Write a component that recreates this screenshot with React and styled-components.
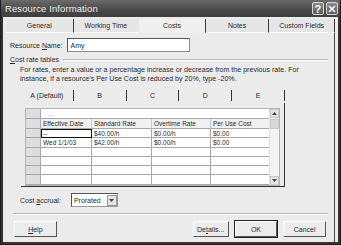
import styled, { createGlobalStyle } from 'styled-components'

const Global = createGlobalStyle`
  html, body { margin: 0; padding: 0; background: #2e2e2e; }
  body { font-family: Tahoma, "DejaVu Sans", "Liberation Sans", sans-serif; }
`

const Win = styled.div`
  width: 341px;
  height: 245px;
  box-sizing: border-box;
  display: flex;
  flex-direction: column;
  background: #333;
  border: 1px solid #1e1e1e;
  border-top: none;
`

const TitleBar = styled.div`
  height: 17px;
  display: flex;
  align-items: center;
  padding: 0 2px 0 4px;
  background: linear-gradient(#6a6a6a, #484848 60%, #404040);
  color: #eee;
  font-family: "Liberation Sans", sans-serif;
  font-size: 9.5px;
  letter-spacing: 0.1px;
`

const Title = styled.div`
  flex: 1;
`

const CapBtn = styled.div`
  width: 12px;
  height: 13px;
  margin-left: 2px;
  border: 1px solid #d8d8d8;
  border-radius: 2px;
  background: linear-gradient(#8a8a8a, #5c5c5c);
  color: #fff;
  font-size: 11px;
  font-weight: bold;
  box-sizing: border-box;
  display: flex;
  align-items: center;
  justify-content: center;
`

const Body = styled.div`
  flex: 1;
  margin: 0 2px 2px 2px;
  background: #ebebeb;
  display: flex;
  flex-direction: column;
  font-family: "Liberation Sans", sans-serif;
  font-size: 7px;
  color: #2a2a2a;
`

const TabStrip = styled.div`
  display: flex;
  height: 16px;
  padding: 0 3px 0 3px;
  background: #ebebeb;
`

const Tab = styled.div`
  width: ${p => p.$w}px;
  display: flex;
  align-items: center;
  justify-content: center;
  box-sizing: border-box;
  border-right: 1px solid ${p => (p.$sep ? '#3a3a3a' : 'transparent')};
  background: ${p => (p.$active ? '#efefef' : '#e6e6e6')};
  margin-top: 2px;
  border-bottom: 1px solid ${p => (p.$active ? 'transparent' : '#fafafa')};
`

const Panel = styled.div`
  flex: 1;
  margin: 0 3px 0 1px;
  border-right: 1px solid #4a4a4a;
  display: flex;
  flex-direction: column;
  padding: 3px 0 0 6px;
`

const Row = styled.div`
  display: flex;
  align-items: center;
  gap: ${p => p.$gap || 3}px;
  padding-left: ${p => p.$indent || 0}px;
  margin-top: ${p => p.$mt || 0}px;
`

const Field = styled.div`
  width: ${p => p.$w}px;
  height: 14px;
  box-sizing: border-box;
  border: 1px solid #8a8a8a;
  border-top-color: #555;
  border-left-color: #555;
  background: #fff;
  display: flex;
  align-items: center;
  padding-left: 3px;
`

const GroupHead = styled.div`
  display: flex;
  align-items: center;
  gap: 3px;
  margin-top: 4px;
  padding-right: 6px;
  &::after {
    content: '';
    flex: 1;
    border-top: 1px solid #b8b8b8;
    border-bottom: 1px solid #fff;
  }
`

const Note = styled.div`
  padding-left: 10px;
  margin-top: 3px;
  line-height: 8.5px;
  font-size: 7.1px;
  white-space: nowrap;
`

const InnerTabs = styled.div`
  display: flex;
  margin: 6px 0 0 11px;
  height: 14px;
  width: 264px;
`

const InnerTab = styled.div`
  flex: 1;
  display: flex;
  align-items: center;
  justify-content: center;
  border-right: 1px solid #333;
  margin: 1px 0 2px;
`

const GridPanel = styled.div`
  margin-left: 11px;
  width: 264px;
  height: 84px;
  box-sizing: border-box;
  border-right: 1px solid #333;
  border-bottom: 1px solid #333;
  padding: 5px 4px 0 4px;
`

const GridWrap = styled.div`
  display: flex;
  height: 76px;
  border: 1px solid #b4b4b4;
  background: #fff;
`

const Grid = styled.div`
  flex: 1;
  display: grid;
  grid-template-columns: 15px 51px 60px 59px 60px;
  grid-template-rows: 10px 10px repeat(6, 9.3px);
  overflow: hidden;
  font-size: 6.5px;
`

const Cell = styled.div`
  box-sizing: border-box;
  border-right: 1px solid ${p => (p.$head ? '#c8c8c8' : '#a8a8a8')};
  border-bottom: 1px solid #a8a8a8;
  background: ${p => (p.$rowhead ? '#dedede' : p.$head ? '#f1f1f1' : '#fff')};
  padding-left: 2px;
  display: flex;
  align-items: center;
  white-space: nowrap;
  overflow: hidden;
  outline: ${p => (p.$sel ? '1.5px solid #111' : 'none')};
  outline-offset: -1.5px;
`

const EditCell = styled.div`
  grid-column: 2 / span 4;
  box-sizing: border-box;
  border-bottom: 1px solid #a8a8a8;
  padding-left: 7px;
  color: #888;
  display: flex;
  align-items: center;
`

const Scroll = styled.div`
  width: 9px;
  background: #f3f3f3;
  border-left: 1px solid #e0e0e0;
  display: flex;
  flex-direction: column;
  justify-content: space-between;
`

const ScrollBtn = styled.div`
  height: ${p => p.$h || 9}px;
  background: ${p => (p.$thumb ? '#d8d8d8' : '#e4e4e4')};
  border: 1px solid #c8c8c8;
  box-sizing: border-box;
  display: flex;
  align-items: center;
  justify-content: center;
  margin-top: ${p => p.$mt || 0}px;
`

const Select = styled.div`
  width: 47px;
  height: 14px;
  box-sizing: border-box;
  border: 1px solid #555;
  border-right-color: #999;
  border-bottom-color: #999;
  background: #fff;
  display: flex;
  align-items: center;
  padding-left: 2px;
  justify-content: space-between;
`

const DropBtn = styled.div`
  width: 10px;
  height: 11px;
  background: #e4e4e4;
  border: 1px solid #999;
  box-sizing: border-box;
  display: flex;
  align-items: center;
  justify-content: center;
`

const Divider = styled.div`
  margin: 6px 6px 0 3px;
  border-top: 1px solid #b8b8b8;
  border-bottom: 1px solid #fafafa;
`

const Buttons = styled.div`
  display: flex;
  align-items: center;
  margin: 6px 0 0 4px;
  padding-right: 8px;
`

const Btn = styled.div`
  width: ${p => p.$w || 45}px;
  height: 16px;
  margin-left: ${p => p.$ml || 0}px;
  box-sizing: border-box;
  background: #ececec;
  border: 1px solid #fff;
  border-right-color: #555;
  border-bottom-color: #555;
  box-shadow: ${p => (p.$default ? '0 0 0 1px #222' : 'none')};
  display: flex;
  align-items: center;
  justify-content: center;
  font-size: 7px;
`

const U = styled.span`
  text-decoration: underline;
`

const Arrow = ({ down }) => (
  <svg width="5" height="3" viewBox="0 0 5 3">
    <path d={down ? 'M0 0 L5 0 L2.5 3 Z' : 'M0 3 L5 3 L2.5 0 Z'} fill="#444" />
  </svg>
)

const tabs = [
  { label: 'General', w: 68, sep: true },
  { label: 'Working Time', w: 66 },
  { label: 'Costs', w: 67, sep: true, active: true },
  { label: 'Notes', w: 64, sep: true },
  { label: 'Custom Fields', w: 66, sep: true },
]

const rows = [
  ['--', '$40.00/h', '$0.00/h', '$0.00'],
  ['Wed 1/1/03', '$42.00/h', '$0.00/h', '$0.00'],
  ['', '', '', ''],
  ['', '', '', ''],
  ['', '', '', ''],
  ['', '', '', ''],
]

export default function App() {
  return (
    <>
      <Global />
      <Win>
        <TitleBar>
          <Title>Resource Information</Title>
          <CapBtn>?</CapBtn>
          <CapBtn>
            <svg width="8" height="8" viewBox="0 0 8 8">
              <path d="M1 1 L7 7 M7 1 L1 7" stroke="#fff" strokeWidth="1.6" />
            </svg>
          </CapBtn>
        </TitleBar>
        <Body>
          <TabStrip>
            {tabs.map(t => (
              <Tab key={t.label} $w={t.w} $sep={t.sep} $active={t.active}>
                {t.label}
              </Tab>
            ))}
          </TabStrip>
          <Panel>
            <Row $gap={4} $mt={2}>
              <span>Resource <U>N</U>ame:</span>
              <Field $w={123}>Amy</Field>
            </Row>
            <GroupHead>
              <span><U>C</U>ost rate tables</span>
            </GroupHead>
            <Note>
              For rates, enter a value or a percentage increase or decrease from the previous rate. For
              <br />
              instance, if a resource's Per Use Cost is reduced by 20%, type -20%.
            </Note>
            <InnerTabs>
              <InnerTab>A (Default)</InnerTab>
              <InnerTab>B</InnerTab>
              <InnerTab>C</InnerTab>
              <InnerTab>D</InnerTab>
              <InnerTab>E</InnerTab>
            </InnerTabs>
            <GridPanel>
              <GridWrap>
                <Grid>
                  <Cell $rowhead />
                  <EditCell>...</EditCell>
                  <Cell $rowhead />
                  <Cell $head>Effective Date</Cell>
                  <Cell $head>Standard Rate</Cell>
                  <Cell $head>Overtime Rate</Cell>
                  <Cell $head>Per Use Cost</Cell>
                  {rows.map((r, i) => [
                    <Cell key={'h' + i} $rowhead />,
                    ...r.map((v, j) => (
                      <Cell key={i + '-' + j} $sel={i === 0 && j === 0}>
                        {v}
                      </Cell>
                    )),
                  ])}
                </Grid>
                <Scroll>
                  <div>
                    <ScrollBtn><Arrow /></ScrollBtn>
                    <ScrollBtn $thumb $h={10} $mt={1} />
                  </div>
                  <ScrollBtn><Arrow down /></ScrollBtn>
                </Scroll>
              </GridWrap>
            </GridPanel>
            <Row $gap={10} $indent={10} $mt={6}>
              <span>Cost <U>a</U>ccrual:</span>
              <Select>
                Prorated
                <DropBtn><Arrow down /></DropBtn>
              </Select>
            </Row>
            <Divider />
            <Buttons>
              <Btn $w={44}><U>H</U>elp</Btn>
              <Btn $w={37} $ml={136}>De<U>t</U>ails...</Btn>
              <Btn $w={44} $ml={6} $default>OK</Btn>
              <Btn $w={44} $ml={6}>Cancel</Btn>
            </Buttons>
          </Panel>
        </Body>
      </Win>
    </>
  )
}
